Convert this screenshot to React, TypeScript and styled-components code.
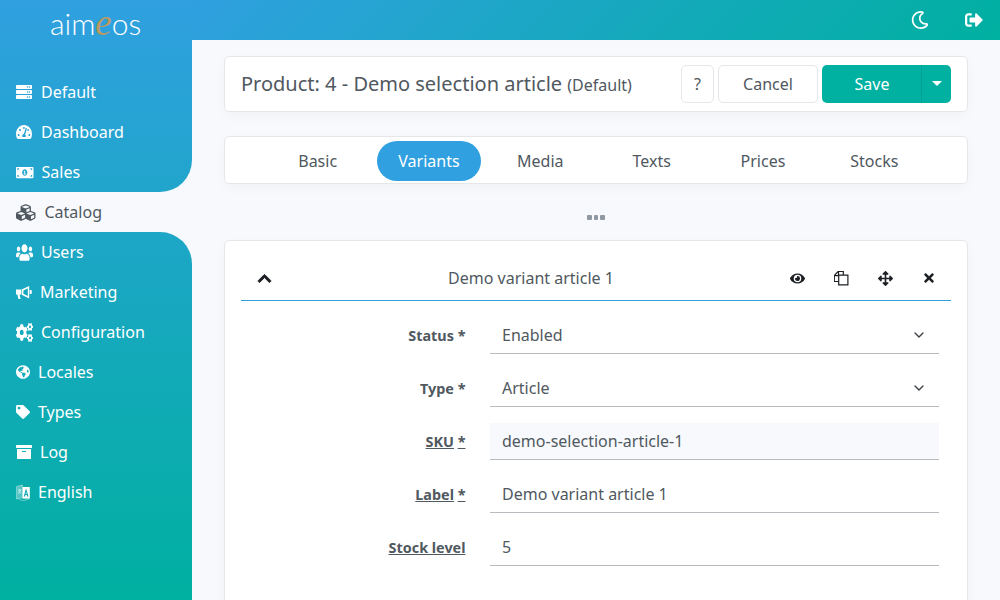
import { createGlobalStyle } from "styled-components";
import styled from "styled-components";
import type { ComponentType } from "react";
import {
  FaServer, FaTachometerAlt, FaMoneyBillAlt, FaCubes, FaUsers, FaCogs,
  FaGlobeAmericas, FaTag, FaArchive, FaRegMoon, FaSignOutAlt, FaEye,
  FaArrowsAlt, FaTimes, FaChevronUp,
} from "react-icons/fa";
import { FiChevronDown } from "react-icons/fi";

const GRADIENT_V = "linear-gradient(180deg, #30a0e0, #00b0a0)";

const Global = createGlobalStyle`
  html, body { margin: 0; height: 100%; }
  body {
    background: #f7f9fc;
    color: #505860;
    font-family: "Noto Sans", "Open Sans", sans-serif;
    font-size: 16px;
    overflow: hidden;
  }
`;

const Page = styled.div`
  display: grid;
  grid-template-columns: 192px 1fr;
  width: 1000px;
  height: 600px;
  overflow: hidden;
`;

const Sidebar = styled.aside`
  display: flex;
  flex-direction: column;
  height: 600px;
`;
const SideTop = styled.div`
  height: 192px;
  background: ${GRADIENT_V};
  background-size: 100% 600px;
  border-bottom-right-radius: 32px;
`;
const SideBottom = styled.div`
  flex: 1;
  padding-bottom: 88px;
  background: ${GRADIENT_V};
  background-size: 100% 600px;
  background-position: 0 -232px;
  border-top-right-radius: 32px;
`;
const Logo = styled.div`
  height: 72px;
  padding: 4px 0 0 50px;
  box-sizing: border-box;
  font-family: "Lato", sans-serif;
  font-weight: 300;
  font-size: 30px;
  line-height: 36px;
  color: #fff;
  em {
    color: #bb9a60;
    font-family: "Liberation Serif", serif;
    font-size: 37px;
    line-height: 1;
  }
`;
const NavItem = styled.div<{ $active?: boolean; $gap: number }>`
  display: flex;
  align-items: center;
  gap: ${({ $gap }) => $gap}px;
  height: 40px;
  padding-left: 16px;
  color: ${({ $active }) => ($active ? "#505860" : "#fff")};
`;
const NavIcon = styled.span<{ $w: number; $h: number }>`
  display: flex;
  flex: none;
  svg {
    width: ${({ $w }) => $w}px;
    height: ${({ $h }) => $h}px;
  }
`;

const TopBar = styled.header`
  display: flex;
  justify-content: flex-end;
  align-items: center;
  gap: 36px;
  height: 40px;
  padding-right: 17px;
  background: linear-gradient(135deg, #30a0e0, #00b0a0);
  color: #fff;
  font-size: 18px;
`;
const Main = styled.main`
  display: flex;
  flex-direction: column;
  min-width: 0;
`;
const Content = styled.div`
  padding: 16px 32px 0;
`;
const Panel = styled.section`
  background: #fff;
  border: 1px solid #e4e6ea;
  border-radius: 5px;
  box-shadow: 0 4px 12px rgba(0, 0, 0, 0.03);
`;
const TitleBar = styled(Panel)`
  display: flex;
  align-items: center;
  height: 56px;
  box-sizing: border-box;
  padding: 0 16px;
`;
const Title = styled.h1`
  flex: 1;
  margin: 0 0 2px;
  font-size: 20px;
  font-weight: 400;
  small { font-size: 16px; }
`;
const Button = styled.button<{ $w: number }>`
  width: ${({ $w }) => $w}px;
  height: 38px;
  margin-left: 4px;
  padding: 0;
  border: 1px solid #e4e6ea;
  border-radius: 5px;
  background: #fff;
  color: #505860;
  font: inherit;
`;
const SaveGroup = styled.div`
  display: flex;
  margin-left: 4px;
`;
const SaveButton = styled.button`
  width: 99px;
  height: 38px;
  padding: 0 0 0 1px;
  border: 0;
  border-radius: 5px 0 0 5px;
  background: #00b0a0;
  color: #fff;
  font: inherit;
`;
const SaveToggle = styled.button`
  display: flex;
  align-items: center;
  justify-content: center;
  width: 30px;
  height: 38px;
  padding: 0 0 2px;
  border: 0;
  border-left: 1px solid #00a090;
  border-radius: 0 5px 5px 0;
  background: #00b0a0;
`;
const Caret = styled.span`
  width: 0;
  height: 0;
  border-top: 5px solid #fff;
  border-left: 5px solid transparent;
  border-right: 5px solid transparent;
`;
const Tabs = styled(Panel)`
  display: flex;
  justify-content: center;
  gap: 7.33px;
  align-items: center;
  height: 48px;
  box-sizing: border-box;
  margin-top: 24px;
  padding-top: 2px;
`;
const Tab = styled.div<{ $active?: boolean }>`
  width: 104px;
  height: 40px;
  line-height: 40px;
  text-align: center;
  border-radius: 20px;
  background: ${({ $active }) => ($active ? "#30a0e0" : "transparent")};
  color: ${({ $active }) => ($active ? "#fff" : "#505860")};
`;
const Dots = styled.div`
  display: flex;
  justify-content: center;
  gap: 2px;
  align-items: center;
  height: 56px;
  padding-top: 10px;
  box-sizing: border-box;
`;
const Dot = styled.span`
  width: 4.5px;
  height: 5px;
  border-radius: 1px;
  background: #8f98a3;
`;
const ItemCard = styled(Panel)`
  padding: 16px 16px 0;
  height: 400px;
  box-sizing: border-box;
`;
const ItemHeader = styled.div`
  display: flex;
  align-items: center;
  height: 42px;
  padding-bottom: 1px;
  border-bottom: 1px solid #30a0e0;
  color: #505860;
`;
const Toggle = styled.div`
  display: flex;
  justify-content: center;
  width: 45px;
  padding-left: 1px;
  color: #1c2024;
  font-size: 15px;
  svg { stroke: currentColor; stroke-width: 30px; }
`;
const ItemTitle = styled.div`
  flex: 1;
  text-align: center;
`;
const Action = styled.div<{ $size: number }>`
  display: flex;
  justify-content: center;
  width: 44px;
  color: #1c2024;
  font-size: ${({ $size }) => $size}px;
`;
const Form = styled.div`
  display: flex;
  flex-direction: column;
  gap: 16px;
  margin-top: 16px;
`;
const Row = styled.div`
  display: grid;
  grid-template-columns: 224.5px 449px;
  column-gap: 24.5px;
  align-items: center;
`;
const Label = styled.label`
  text-align: right;
  font-size: 14.4px;
  font-weight: 700;
`;
const Help = styled.span`
  text-decoration: underline;
`;
const Field = styled.div<{ $readOnly?: boolean }>`
  display: flex;
  justify-content: space-between;
  align-items: center;
  height: 37px;
  box-sizing: border-box;
  padding: 0 12px;
  border-bottom: 1px solid #b8bcc0;
  background: ${({ $readOnly }) => ($readOnly ? "#f7f9fc" : "#fff")};
  svg { font-size: 16px; color: #3a4046; }
`;

function LanguageIcon() {
  return (
    <svg viewBox="0 0 14 17" aria-hidden="true">
      <path d="M.6 2.6 6.4 1v12.6L.6 15z" fill="#fff" fillOpacity="0.3" stroke="#fff" strokeWidth="0.6" strokeOpacity="0.7" />
      <path d="M2 6h3M3.5 5v1M2.6 9.5 4.6 6.4M2.8 7.4l2 2" stroke="#fff" strokeWidth="0.7" fill="none" />
      <path d="M3 15.6 8 16.6 13.4 15" stroke="#fff" strokeWidth="0.6" strokeOpacity="0.6" fill="none" />
      <path d="M6.6 3h7.2v11.6H6.6z" fill="#fff" />
      <path d="M7.8 12.6 9.6 5.4h1l1.8 7.2h-1.2l-.4-1.7H9.4L9 12.6zM9.6 9.9h1l-.5-2.4z" fill="#10a8b0" fillRule="evenodd" />
    </svg>
  );
}

function BullhornIcon() {
  return (
    <svg viewBox="0 0 16 15" aria-hidden="true">
      <path d="M0 4.6h5v5H3.6l1 4.4H2.4L1.4 9.6H0z" fill="#fff" />
      <path d="M5.6 4.4 13.2 1v12.4L5.6 9.8z" fill="#fff" />
      <path d="M7.4 5.6 11.8 3.4v7.6L7.4 8.8z" fill="#14a6bc" />
      <path d="M13.6 5h1.2a1 1 0 0 1 1 1v2a1 1 0 0 1-1 1h-1.2z" fill="#fff" />
    </svg>
  );
}

function CopyIcon() {
  return (
    <svg width="15" height="15" viewBox="0.5 0.5 15 15" fill="none" stroke="#1c2024" strokeWidth="1.2" aria-hidden="true">
      <path d="M5 11H.8V5L4.8.8H9.8V4.6" />
      <path d="M5 1v4.2H1" />
      <path d="M5.2 4.6h9.2v9.8H5.2z" />
    </svg>
  );
}

type NavEntry = {
  label: string;
  Icon: ComponentType<{ preserveAspectRatio?: string }>;
  w: number;
  h: number;
  gap?: number;
  active?: boolean;
};

const topNav: NavEntry[] = [
  { label: "Default", Icon: FaServer, w: 16, h: 16, gap: 9 },
  { label: "Dashboard", Icon: FaTachometerAlt, w: 16, h: 16, gap: 9 },
  { label: "Sales", Icon: FaMoneyBillAlt, w: 17.5, h: 15 },
];
const bottomNav: NavEntry[] = [
  { label: "Users", Icon: FaUsers, w: 17, h: 19 },
  { label: "Marketing", Icon: BullhornIcon, w: 16, h: 15 },
  { label: "Configuration", Icon: FaCogs, w: 17, h: 19 },
  { label: "Locales", Icon: FaGlobeAmericas, w: 14, h: 14 },
  { label: "Types", Icon: FaTag, w: 14, h: 14 },
  { label: "Log", Icon: FaArchive, w: 16, h: 16 },
  { label: "English", Icon: LanguageIcon, w: 14, h: 17 },
];
const tabs = ["Basic", "Variants", "Media", "Texts", "Prices", "Stocks"];

const NavRow = ({ label, Icon, w, h, gap = 8, active }: NavEntry) => (
  <NavItem $active={active} $gap={gap}>
    <NavIcon $w={w} $h={h}>
      <Icon preserveAspectRatio="none" />
    </NavIcon>
    {label}
  </NavItem>
);

export default function App() {
  return (
    <Page>
      <Global />
      <Sidebar>
        <SideTop>
          <Logo>aim<em>e</em>os</Logo>
          {topNav.map((n) => <NavRow key={n.label} {...n} />)}
        </SideTop>
        <NavRow label="Catalog" Icon={FaCubes} w={19.5} h={19} gap={9} active />
        <SideBottom>
          {bottomNav.map((n) => <NavRow key={n.label} {...n} />)}
        </SideBottom>
      </Sidebar>
      <Main>
        <TopBar>
          <FaRegMoon />
          <FaSignOutAlt />
        </TopBar>
        <Content>
          <TitleBar>
            <Title>Product: 4 - Demo selection article <small>(Default)</small></Title>
            <Button $w={33}>?</Button>
            <Button $w={100}>Cancel</Button>
            <SaveGroup>
              <SaveButton>Save</SaveButton>
              <SaveToggle><Caret /></SaveToggle>
            </SaveGroup>
          </TitleBar>
          <Tabs>
            {tabs.map((t) => <Tab key={t} $active={t === "Variants"}>{t}</Tab>)}
          </Tabs>
          <Dots><Dot /><Dot /><Dot /></Dots>
          <ItemCard>
            <ItemHeader>
              <Toggle><FaChevronUp /></Toggle>
              <ItemTitle>Demo variant article 1</ItemTitle>
              <Action $size={15}><FaEye /></Action>
              <Action $size={14}><CopyIcon /></Action>
              <Action $size={15}><FaArrowsAlt /></Action>
              <Action $size={14}><FaTimes /></Action>
            </ItemHeader>
            <Form>
              <Row>
                <Label>Status *</Label>
                <Field>Enabled<FiChevronDown /></Field>
              </Row>
              <Row>
                <Label>Type *</Label>
                <Field>Article<FiChevronDown /></Field>
              </Row>
              <Row>
                <Label><Help>SKU</Help> <Help>*</Help></Label>
                <Field $readOnly>demo-selection-article-1</Field>
              </Row>
              <Row>
                <Label><Help>Label</Help> <Help>*</Help></Label>
                <Field>Demo variant article 1</Field>
              </Row>
              <Row>
                <Label><Help>Stock level</Help></Label>
                <Field>5</Field>
              </Row>
            </Form>
          </ItemCard>
        </Content>
      </Main>
    </Page>
  );
}
